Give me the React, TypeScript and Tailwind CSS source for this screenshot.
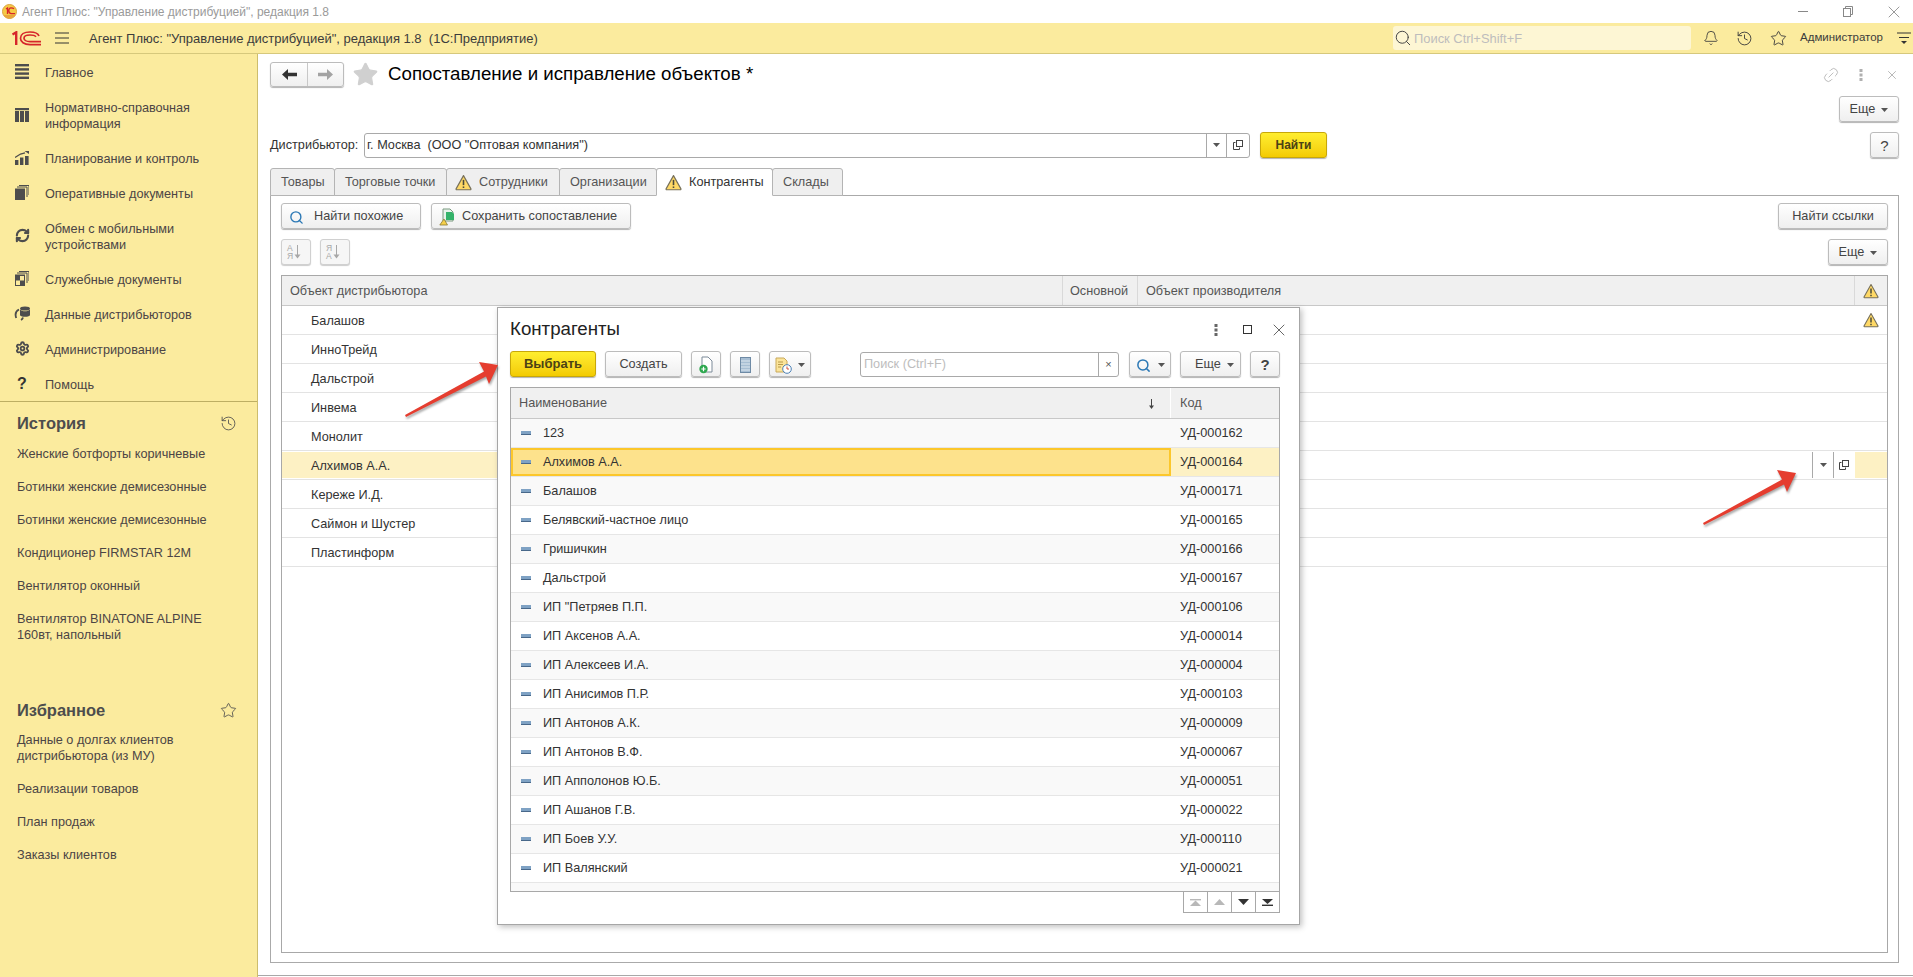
import React from "react";
import { Search, Bell, History, Star, Link2, RefreshCw, Settings, X } from "lucide-react";

const Caret = ({ className = "" }: { className?: string }) => (
  <svg width="7" height="4" viewBox="0 0 7 4" className={className}><path d="M0 0h7L3.5 4z" fill="#555" /></svg>
);

const Warn = ({ size = 16 }: { size?: number }) => (
  <svg width={size} height={size} viewBox="0 0 16 16">
    <path d="M8 1.5 15 14a.6.6 0 0 1-.5.8H1.5A.6.6 0 0 1 1 14z" fill="#ffd966" stroke="#77705a" strokeWidth="1.1" strokeLinejoin="round" />
    <path d="M8 5.5v5" stroke="#4a4a3a" strokeWidth="1.5" />
    <path d="M8 11.7v1.5" stroke="#4a4a3a" strokeWidth="1.5" />
  </svg>
);

const Dots = ({ color = "#666" }: { color?: string }) => (
  <svg width="4" height="14" viewBox="0 0 4 14"><g fill={color}><rect x="0.5" y="1" width="3" height="3" /><rect x="0.5" y="5.5" width="3" height="3" /><rect x="0.5" y="10" width="3" height="3" /></g></svg>
);

const OpenIcon = () => (
  <svg width="10" height="10" viewBox="0 0 10 10" fill="none" stroke="#444"><path d="M2.5 2.5H.5v7h6V7.5" /><rect x="3.5" y=".5" width="6" height="6" /></svg>
);

const Btn = ({ className = "", children }: { className?: string; children: React.ReactNode }) => (
  <div className={`h-[26px] shrink-0 flex items-center justify-center rounded-[3px] border border-[#bcbcbc] bg-linear-to-b from-white to-[#efefef] shadow-[0_1px_1px_rgba(0,0,0,0.3)] text-[#444] pt-[2px] ${className}`}>
    {children}
  </div>
);

const YellowBtn = ({ className = "", children }: { className?: string; children: React.ReactNode }) => (
  <div className={`h-[26px] shrink-0 flex items-center justify-center rounded-[3px] border border-[#c7a70a] bg-linear-to-b from-[#ffee2e] to-[#f3cb00] shadow-[0_1px_1px_rgba(0,0,0,0.3)] font-bold text-[#4b4215] ${className}`}>
    {children}
  </div>
);

const SortIcon = ({ down }: { down: boolean }) => (
  <svg width="20" height="18" viewBox="0 0 20 18">
    <text x="1" y="8" fontSize="8.5" fill="#a8a8a8" fontFamily="Liberation Sans">{down ? "А" : "Я"}</text>
    <text x="1" y="16" fontSize="8.5" fill="#a8a8a8" fontFamily="Liberation Sans">{down ? "Я" : "А"}</text>
    <path d="M11.5 2v12" stroke="#a8a8a8" />
    <path d="M8.5 11.5h6l-3 4z" fill="#a8a8a8" />
  </svg>
);

const cls = "#4d4d4d";
const navIcons: Record<string, React.ReactNode> = {
  main: <svg width="14" height="15" viewBox="0 0 14 15" fill={cls}><rect y="0" width="14" height="2.4" /><rect y="4.2" width="14" height="2.4" /><rect y="8.4" width="14" height="2.4" /><rect y="12.6" width="14" height="2.4" /></svg>,
  ref: <svg width="14" height="14" viewBox="0 0 14 14" fill={cls}><rect width="14" height="2.2" /><rect y="3" width="4" height="11" /><rect x="5" y="3" width="4" height="11" /><rect x="10" y="3" width="4" height="11" /></svg>,
  plan: <svg width="14" height="14" viewBox="0 0 14 14" fill={cls}><rect y="9" width="3.4" height="5" /><rect x="5" y="6.5" width="3.4" height="7.5" /><rect x="10" y="5" width="3.6" height="9" /><path d="M0 6.5 5.5 3 10 1.8" fill="none" stroke={cls} strokeWidth="1.3" /><path d="M9.5 0 14 0v3z" /></svg>,
  docs: <svg width="14" height="15" viewBox="0 0 14 15"><rect y="3.5" width="10" height="11.5" fill={cls} /><path d="M2 2H12V12M4 .5H14V10" fill="none" stroke={cls} strokeWidth="1" /></svg>,
  sync: <RefreshCw size={15} strokeWidth={3.4} color={cls} />,
  svc: <svg width="14" height="15" viewBox="0 0 14 15"><rect y="3.5" width="10" height="11.5" fill={cls} /><rect x="5" y="5" width="4" height="4.5" fill="#fbeb9e" /><rect x="1" y="9.5" width="4" height="4.5" fill="#fbeb9e" /><path d="M2 2H12V12M4 .5H14V10" fill="none" stroke={cls} strokeWidth="1" /></svg>,
  data: <svg width="16" height="15" viewBox="0 0 16 15" fill="none"><ellipse cx="11" cy="2.5" rx="5" ry="2" fill={cls} /><path d="M6 3.5v5.5c0 1 2.2 1.8 5 1.8s5-.8 5-1.8V3.5c-1 1.2-3 1.8-5 1.8s-4-.6-5-1.8z" fill={cls} /><path d="M5 3.5C2 5 .8 8 2.2 12" stroke={cls} strokeWidth="1.8" /><path d="M9 11.5c-.3 1.3-1 2-2 2.5" stroke={cls} strokeWidth="1.8" /></svg>,
  admin: <Settings size={15} strokeWidth={3} color={cls} />,
  help: <span className="text-[16px] font-bold leading-none text-[#333]">?</span>,
};

const navItems: { icon: string; text: React.ReactNode; tall?: boolean }[] = [
  { icon: "main", text: "Главное" },
  { icon: "ref", text: <>Нормативно-справочная<br />информация</>, tall: true },
  { icon: "plan", text: "Планирование и контроль" },
  { icon: "docs", text: "Оперативные документы" },
  { icon: "sync", text: <>Обмен с мобильными<br />устройствами</>, tall: true },
  { icon: "svc", text: "Служебные документы" },
  { icon: "data", text: "Данные дистрибьюторов" },
  { icon: "admin", text: "Администрирование" },
  { icon: "help", text: "Помощь" },
];

const historyItems: React.ReactNode[] = [
  "Женские ботфорты коричневые",
  "Ботинки женские демисезонные",
  "Ботинки женские демисезонные",
  "Кондиционер FIRMSTAR 12M",
  "Вентилятор оконный",
  <>Вентилятор BINATONE ALPINE<br />160вт, напольный</>,
];

const favItems: React.ReactNode[] = [
  <>Данные о долгах клиентов<br />дистрибьютора (из МУ)</>,
  "Реализации товаров",
  "План продаж",
  "Заказы клиентов",
];

const tabs = [
  { t: "Товары", w: "w-[65px]", pl: "pl-[10px]" },
  { t: "Торговые точки", w: "w-[113px]", pl: "pl-[10px]" },
  { t: "Сотрудники", w: "w-[114px]", pl: "pl-[8px]", warn: true },
  { t: "Организации", w: "w-[98px]", pl: "pl-[10px]" },
  { t: "Контрагенты", w: "w-[117px]", pl: "pl-[8px]", warn: true, active: true },
  { t: "Склады", w: "w-[71px]", pl: "pl-[10px]" },
];

const outerRows = ["Балашов", "ИнноТрейд", "Дальстрой", "Инвема", "Монолит", "Алхимов А.А.", "Кереже И.Д.", "Саймон и Шустер", "Пластинформ"];

const modalRows: [string, string][] = [
  ["123", "УД-000162"],
  ["Алхимов А.А.", "УД-000164"],
  ["Балашов", "УД-000171"],
  ["Белявский-частное лицо", "УД-000165"],
  ["Гришичкин", "УД-000166"],
  ["Дальстрой", "УД-000167"],
  ['ИП "Петряев П.П.', "УД-000106"],
  ["ИП Аксенов А.А.", "УД-000014"],
  ["ИП Алексеев И.А.", "УД-000004"],
  ["ИП Анисимов П.Р.", "УД-000103"],
  ["ИП Антонов А.К.", "УД-000009"],
  ["ИП Антонов В.Ф.", "УД-000067"],
  ["ИП Апполонов Ю.Б.", "УД-000051"],
  ["ИП Ашанов Г.В.", "УД-000022"],
  ["ИП Боев У.У.", "УД-000110"],
  ["ИП Валянский", "УД-000021"],
  ["", ""],
];

const Dash = () => (
  <span className="block w-[10px] h-[4px] bg-[#7fa2c4] border-b border-[#48688a] shrink-0" />
);

const Arrow = ({ className }: { className: string }) => (
  <svg width="100" height="60" viewBox="0 0 100 60" className={`absolute drop-shadow-[1px_2px_1px_rgba(0,0,0,0.35)] ${className}`}>
    <path d="M3 55 82 11.5 77 2 96 5 87 24 84 16.5 4 57z" fill="#e53d2f" />
  </svg>
);

export default function App() {
  return (
    <div className="relative w-[1913px] h-[977px] overflow-hidden bg-white flex flex-col text-[12.7px] text-[#333] font-['Liberation_Sans',Arial,sans-serif]">
      {/* Window title */}
      <div className="h-[23px] flex items-center shrink-0">
        <svg width="15" height="15" viewBox="0 0 15 15" className="ml-[2px]">
          <circle cx="7.5" cy="7.5" r="7" fill="#f6c945" stroke="#d9a441" />
          <path d="M1.5 11a7 7 0 0 0 12 0z" fill="#e9a63c" />
          <path d="M4 5 5.5 4v6M12 4.8C11 3.8 9.8 3.8 9 3.8 7.5 3.8 6.8 5 6.8 6.8S7.8 9.6 9.3 9.6H13" fill="none" stroke="#d6262b" strokeWidth="1.3" />
        </svg>
        <span className="ml-[5px] text-[#9a9a9a] text-[12px]">Агент Плюс: "Управление дистрибуцией", редакция 1.8</span>
        <div className="ml-auto flex items-center">
          <span className="block w-[10px] h-px bg-[#888] mr-[35px]" />
          <svg width="10" height="11" viewBox="0 0 10 11" fill="none" stroke="#888" className="mr-[31px]"><rect x=".5" y="2.5" width="7" height="8" /><path d="M2.5 2.5v-2h7v8h-2" /></svg>
          <X size={20} strokeWidth={0.9} color="#777" className="mr-[9px]" />
        </div>
      </div>

      {/* Top bar */}
      <div className="h-[31px] shrink-0 flex items-center bg-[#fbeb9e] border-b border-[#d6c87c]">
        <svg width="29" height="15" viewBox="0 0 29 15" fill="none" className="ml-[12px] shrink-0" stroke="#d6262b">
          <path d="M.5 3.5 4.2 1.3V14" strokeWidth="2.4" />
          <path d="M27 5C26 2.3 23 1 18 1 12 1 8.5 3.6 8.5 7.2S12 13.6 18 13.6H29" strokeWidth="1.7" />
          <path d="M24 5.8C23 4.5 21 4 18 4 14.5 4 12 5.3 12 7.2S14.5 10.6 18 10.6H29" strokeWidth="1.7" />
        </svg>
        <svg width="14" height="12" viewBox="0 0 14 12" className="ml-[14px] shrink-0" stroke="#333"><path d="M0 1h14M0 6h14M0 11h14" /></svg>
        <span className="ml-[20px] pt-[2px] text-[#3c3c3c] text-[13px] whitespace-pre">Агент Плюс: "Управление дистрибуцией", редакция 1.8  (1С:Предприятие)</span>
        <div className="ml-auto w-[298px] h-[24px] bg-[#fdf6d4] rounded-[3px] flex items-center">
          <Search size={18} strokeWidth={1.3} color="#444" className="ml-[1px]" />
          <span className="ml-[2px] pt-[2px] text-[#bdbdbd] text-[12.9px]">Поиск Ctrl+Shift+F</span>
        </div>
        <Bell size={16} strokeWidth={1.3} color="#3c3c3c" className="ml-[12px]" />
        <History size={17} strokeWidth={1.3} color="#3c3c3c" className="ml-[17px]" />
        <Star size={17} strokeWidth={1.3} color="#3c3c3c" className="ml-[17px]" />
        <span className="ml-[13px] text-[11.5px] text-[#3c3c3c]">Администратор</span>
        <svg width="14" height="14" viewBox="0 0 14 14" className="ml-[14px] mr-[2px] shrink-0"><path d="M0 2h14M2 6.5h10" stroke="#333" /><path d="M4 10h6l-3 3z" fill="#333" /></svg>
      </div>

      <div className="flex flex-1 min-h-0">
        {/* Sidebar */}
        <aside className="w-[258px] shrink-0 bg-[#fbeb9e] border-r border-[#cdbd6d] flex flex-col text-[#4b4545]">
          <nav className="border-b border-[#bdae63]">
            {navItems.map((n, i) => (
              <div key={i} className={`flex items-center ${n.tall ? "h-[51px]" : "h-[35px]"}`}>
                <span className="w-[45px] shrink-0 flex justify-center pr-[1px]">{navIcons[n.icon]}</span>
                <span className="leading-[16px] pt-[2px]">{n.text}</span>
              </div>
            ))}
          </nav>
          <div className="pl-[17px] pt-[13px]">
            <div className="flex items-center justify-between h-[16px] pr-[20px]">
              <span className="text-[16.5px] font-bold text-[#4d4d4d]">История</span>
              <History size={17} strokeWidth={1.2} color="#4d4d4d" />
            </div>
            <div className="mt-[15px] flex flex-col gap-[17px] leading-[16px]">
              {historyItems.map((t, i) => <div key={i}>{t}</div>)}
            </div>
            <div className="mt-[59px] flex items-center justify-between h-[16px] pr-[20px]">
              <span className="text-[16.5px] font-bold text-[#4d4d4d]">Избранное</span>
              <Star size={17} strokeWidth={1.2} color="#4d4d4d" />
            </div>
            <div className="mt-[14px] flex flex-col gap-[17px] leading-[16px]">
              {favItems.map((t, i) => <div key={i}>{t}</div>)}
            </div>
          </div>
        </aside>

        {/* Main */}
        <main className="flex-1 min-w-0 flex flex-col pl-[12px] pr-[14px] pt-[8px] border-b border-[#a8a8a8] mb-px">
          <div className="flex items-center h-[25px] shrink-0">
            <div className="flex w-[74px] h-[25px] rounded-[3px] border border-[#bcbcbc] bg-linear-to-b from-white to-[#efefef] shadow-[0_1px_1px_rgba(0,0,0,0.3)]">
              <div className="w-[37px] flex items-center justify-center border-r border-[#c8c8c8]">
                <svg width="15" height="11" viewBox="0 0 15 11"><path d="M0 5.5 6 0v3.8h9v3.4H6V11z" fill="#333" /></svg>
              </div>
              <div className="flex-1 flex items-center justify-center">
                <svg width="15" height="11" viewBox="0 0 15 11"><path d="M15 5.5 9 0v3.8H0v3.4h9V11z" fill="#a3a3a3" /></svg>
              </div>
            </div>
            <Star size={27} fill="#d0d0d0" color="#d0d0d0" strokeWidth={1} className="ml-[8px]" />
            <span className="ml-[9px] text-[18.7px] text-black">Сопоставление и исправление объектов *</span>
            <div className="ml-auto flex items-center">
              <Link2 size={18} strokeWidth={1.1} color="#b5b5b5" className="-rotate-45" />
              <span className="ml-[19px]"><Dots color="#b0b0b0" /></span>
              <X size={14} strokeWidth={1.2} color="#999" className="ml-[22px]" />
            </div>
          </div>

          <div className="mt-[9px] flex justify-end shrink-0">
            <Btn className="w-[60px] gap-[6px]">Еще <Caret /></Btn>
          </div>

          <div className="mt-[10px] flex items-center h-[26px] shrink-0">
            <span className="w-[94px] pt-[2px]">Дистрибьютор:</span>
            <div className="w-[886px] h-[25px] flex rounded-[3px] border border-[#a9a9a9] bg-white text-[#333]">
              <span className="flex-1 flex items-center pl-[2px] pt-[2px] whitespace-pre">г. Москва  (ООО "Оптовая компания")</span>
              <span className="w-[20px] flex items-center justify-center border-l border-[#a9a9a9]"><Caret /></span>
              <span className="w-[23px] flex items-center justify-center border-l border-[#a9a9a9]"><OpenIcon /></span>
            </div>
            <YellowBtn className="ml-[10px] w-[67px] text-[12px]">Найти</YellowBtn>
            <Btn className="ml-auto w-[29px] text-[15px] text-[#222]">?</Btn>
          </div>

          {/* Tabs */}
          <div className="mt-[10px] flex h-[28px] shrink-0 -mb-px relative">
            {tabs.map((t, i) => (
              <div key={i} className={`${t.w} ${t.pl} flex items-center gap-[7px] border border-[#b4b4b4] rounded-t-[3px] -mr-px ${t.active ? "bg-white border-b-white z-10" : "bg-[#efefef]"}`}>
                {t.warn && <Warn size={17} />}
                <span className={`pt-[2px] ${t.active ? "text-[#333]" : "text-[#555]"}`}>{t.t}</span>
              </div>
            ))}
          </div>

          {/* Panel */}
          <div className="h-[768px] shrink-0 border border-[#aaaaaa] px-[10px] pt-[7px] pb-[9px] flex flex-col">
            <div className="flex h-[26px] shrink-0">
              <Btn className="w-[140px] justify-start pl-[7px]">
                <Search size={15} strokeWidth={2.2} color="#2b78b5" />
                <span className="ml-[10px]">Найти похожие</span>
              </Btn>
              <Btn className="ml-[10px] w-[200px] justify-start pl-[7px]">
                <svg width="16" height="18" viewBox="0 0 16 18">
                  <path d="M4 1h7l3 3v9H4z" fill="#e7f3ea" stroke="#7a9a80" />
                  <path d="M7 4h6l2 2v6H7z" fill="#34b36a" />
                  <path d="M5 11 8.5 17H.8z" fill="#f5cf4a" stroke="#8c7a35" strokeWidth=".8" />
                </svg>
                <span className="ml-[7px]">Сохранить сопоставление</span>
              </Btn>
              <Btn className="ml-auto w-[110px]">Найти ссылки</Btn>
            </div>
            <div className="mt-[10px] flex h-[26px] shrink-0">
              <div className="w-[30px] h-[26px] flex items-center justify-center rounded-[3px] border border-[#d0d0d0] bg-[#f6f6f6] shadow-[0_1px_1px_rgba(0,0,0,0.2)]"><SortIcon down /></div>
              <div className="ml-[9px] w-[30px] h-[26px] flex items-center justify-center rounded-[3px] border border-[#d0d0d0] bg-[#f6f6f6] shadow-[0_1px_1px_rgba(0,0,0,0.2)]"><SortIcon down={false} /></div>
              <Btn className="ml-auto w-[60px] gap-[6px]">Еще <Caret /></Btn>
            </div>
            <div className="mt-[10px] flex-1 min-h-0 border border-[#a8a8a8]">
              <div className="grid grid-cols-[781px_75px_717px_1fr] h-[30px] bg-[#f0f0f0] border-b border-[#c8c8c8] text-[#555]">
                <div className="flex items-center pl-[8px] pt-[2px] border-r border-[#d9d9d9]">Объект дистрибьютора</div>
                <div className="flex items-center pl-[7px] pt-[2px] border-r border-[#d9d9d9]">Основной</div>
                <div className="flex items-center pl-[8px] pt-[2px] border-r border-[#d9d9d9]">Объект производителя</div>
                <div className="flex items-center justify-center"><Warn size={16} /></div>
              </div>
              {outerRows.map((r, i) => {
                const active = i === 5;
                return (
                  <div key={i} className={`grid grid-cols-[781px_75px_717px_1fr] h-[29px] border-b border-[#e3e3e3] text-[#333] ${active ? "py-px" : ""}`}>
                    <div className={`flex items-center pl-[29px] pt-[3px] ${active ? "bg-[#fdf1c4]" : ""}`}>{r}</div>
                    <div className={active ? "bg-[#fdf1c4]" : ""} />
                    <div className="flex justify-end">
                      {active && (
                        <div className="flex">
                          <span className="w-[21px] flex items-center justify-center border-l border-[#a9a9a9]"><Caret /></span>
                          <span className="w-[22px] flex items-center justify-center border-l border-[#a9a9a9] pr-[2px]"><OpenIcon /></span>
                        </div>
                      )}
                    </div>
                    <div className={`flex items-center justify-center ${active ? "bg-[#fdf1c4]" : ""}`}>{i === 0 && <Warn size={16} />}</div>
                  </div>
                );
              })}
            </div>
          </div>
        </main>
      </div>

      {/* Modal */}
      <div className="absolute left-[497px] top-[307px] w-[803px] h-[618px] bg-white border border-[#a6a6a6] shadow-[2px_2px_6px_rgba(0,0,0,0.25)] pl-[12px] pr-[19px] flex flex-col">
        <div className="h-[43px] shrink-0 flex items-center">
          <span className="text-[18.7px] text-[#222]">Контрагенты</span>
          <div className="ml-auto flex items-center">
            <Dots />
            <span className="ml-[25px] block w-[9px] h-[9px] border border-[#333]" />
            <X size={20} strokeWidth={0.9} color="#333" className="ml-[17px] mr-[-9px]" />
          </div>
        </div>
        <div className="flex h-[26px] shrink-0 items-center">
          <YellowBtn className="w-[86px] text-[13px]">Выбрать</YellowBtn>
          <Btn className="ml-[9px] w-[77px]">Создать</Btn>
          <Btn className="ml-[9px] w-[30px]">
            <svg width="14" height="18" viewBox="0 0 14 18">
              <path d="M3 1h6l4 4v11H3z" fill="#fff" stroke="#7d8b99" />
              <circle cx="4.5" cy="13" r="4.2" fill="#2ea84f" />
              <path d="M4.5 10.8v4.4M2.3 13h4.4" stroke="#fff" strokeWidth="1.2" />
            </svg>
          </Btn>
          <Btn className="ml-[9px] w-[30px]">
            <svg width="11" height="16" viewBox="0 0 11 16"><rect x=".5" y=".5" width="10" height="15" fill="#a7bed3" stroke="#6e8aa5" /><path d="M1 4h9M1 7h9M1 10h9M1 13h9" stroke="#dfe8f0" /></svg>
          </Btn>
          <Btn className="ml-[9px] w-[42px] gap-[6px]">
            <svg width="17" height="17" viewBox="0 0 17 17">
              <path d="M1 1h8l3 3v11H1z" fill="#fbe49a" stroke="#c9a95a" />
              <path d="M3 5h5M3 7.5h5M3 10h3" stroke="#b89a4a" />
              <circle cx="12" cy="12" r="4.3" fill="#fff" stroke="#4a7fb5" />
              <path d="M12 9.5V12h2" stroke="#d6503a" fill="none" />
            </svg>
            <Caret />
          </Btn>
          <div className="ml-[49px] w-[259px] h-[25px] flex rounded-[3px] border border-[#a9a9a9] bg-white">
            <span className="flex-1 flex items-center pl-[3px] pt-[2px] text-[#bdbdbd]">Поиск (Ctrl+F)</span>
            <span className="w-[20px] flex items-center justify-center border-l border-[#a9a9a9] text-[#555] text-[11px]">×</span>
          </div>
          <Btn className="ml-[10px] w-[42px] gap-[7px]">
            <Search size={15} strokeWidth={2.4} color="#2b78b5" />
            <Caret />
          </Btn>
          <Btn className="ml-[9px] w-[61px] gap-[6px] pl-[8px]">Еще <Caret /></Btn>
          <Btn className="ml-[9px] w-[30px] text-[15px] font-bold text-[#222]">?</Btn>
        </div>
        <div className="mt-[10px] h-[505px] shrink-0 border border-[#a8a8a8] overflow-hidden">
          <div className="grid grid-cols-[660px_1fr] h-[31px] bg-[#f0f0f0] border-b border-[#c8c8c8] text-[#555]">
            <div className="flex items-center justify-between pl-[8px] pr-[15px] pt-[2px] border-r border-white">
              <span>Наименование</span>
              <svg width="7" height="10" viewBox="0 0 7 10"><path d="M3.5 0v9" stroke="#444" /><path d="M1 6.5h5L3.5 10z" fill="#444" /></svg>
            </div>
            <div className="flex items-center pl-[9px] pt-[2px]">Код</div>
          </div>
          {modalRows.map(([n, c], i) => {
            const sel = i === 1;
            const gray = i % 2 === 0;
            return (
              <div key={i} className={`grid grid-cols-[660px_1fr] h-[29px] border-b border-[#e6e6e6] ${gray ? "bg-[#f9f9f9]" : "bg-white"}`}>
                <div className={`flex items-center gap-[12px] ${sel ? "bg-[#fde28c] border-2 border-[#fcc72b] pl-[8px]" : "pl-[10px]"}`}>
                  {n && <Dash />}
                  <span className="pt-[2px]">{n}</span>
                </div>
                <div className={`flex items-center pl-[9px] pt-[2px] ${sel ? "bg-[#fdf1c4]" : ""}`}>{c}</div>
              </div>
            );
          })}
        </div>
        <div className="flex justify-end -mt-px">
          {[
            <svg key="a" width="11" height="7" viewBox="0 0 11 7" fill="#b8b8b8"><rect width="11" height="1.4" /><path d="M5.5 1.5 11 7H0z" /></svg>,
            <svg key="b" width="11" height="6" viewBox="0 0 11 6" fill="#b8b8b8"><path d="M5.5 0 11 6H0z" /></svg>,
            <svg key="c" width="11" height="6" viewBox="0 0 11 6" fill="#333"><path d="M5.5 6 11 0H0z" /></svg>,
            <svg key="d" width="11" height="7" viewBox="0 0 11 7" fill="#333"><rect y="5.6" width="11" height="1.4" /><path d="M5.5 5 11 0H0z" /></svg>,
          ].map((icon, i) => (
            <div key={i} className="w-[25px] h-[22px] flex items-center justify-center border border-[#a8a8a8] -ml-px">{icon}</div>
          ))}
        </div>
      </div>

      <Arrow className="left-[402px] top-[360px]" />
      <Arrow className="left-[1700px] top-[468px]" />
    </div>
  );
}
